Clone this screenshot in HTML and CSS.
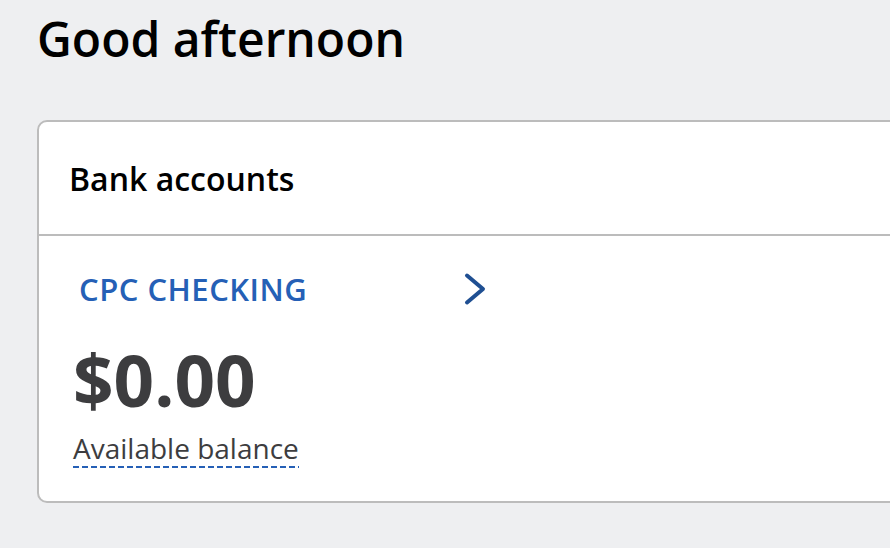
FILE: index.html
```html
<!DOCTYPE html>
<html>
<head>
<meta charset="utf-8">
<link rel="stylesheet" href="styles.css">
</head>
<body>
<main class="page">
  <h1 class="greeting">Good afternoon</h1>
  <section class="card">
    <header class="card-header">
      <h2 class="card-title">Bank accounts</h2>
    </header>
    <div class="card-body">
      <a class="account-row" href="#">
        <span class="account-name">CPC CHECKING</span>
        <svg class="chevron" width="24" height="34" viewBox="0 0 24 34" aria-hidden="true">
          <path d="M4 3.5 L20 17 L4 30.5" fill="none" stroke="#1f4f92" stroke-width="4" stroke-linecap="round" stroke-linejoin="round"/>
        </svg>
      </a>
      <div class="balance">$0.00</div>
      <div class="balance-label"><span class="dotted">Available balance</span></div>
    </div>
  </section>
</main>
</body>
</html>
```

FILE: styles.css
```css
html, body {
  margin: 0;
  padding: 0;
  background: #eeeff1;
  font-family: "Open Sans", "Noto Sans", sans-serif;
}
.page {
  padding: 9px 0 0 37px;
  width: 890px;
  height: 548px;
  box-sizing: border-box;
  overflow: hidden;
}
.greeting {
  margin: 0;
  font-size: 48px;
  font-weight: 600;
  color: #000;
  line-height: 60px;
}
.card {
  margin-top: 51px;
  width: 900px;
  height: 383px;
  background: #fff;
  border: 2px solid #bcbcbc;
  border-radius: 10px;
  box-sizing: border-box;
}
.card-header {
  height: 112px;
  border-bottom: 2px solid #bcbcbc;
  display: flex;
  align-items: center;
  padding-left: 30px;
}
.card-title {
  margin: 0;
  font-size: 32px;
  font-weight: 600;
  color: #000;
}
.card-body {
  padding: 33px 0 0 34px;
}
.account-row {
  display: flex;
  align-items: center;
  justify-content: space-between;
  width: 414px;
  height: 40px;
  padding-left: 6px;
  box-sizing: border-box;
  text-decoration: none;
}
.account-name {
  font-size: 31px;
  line-height: 40px;
  font-weight: 600;
  color: #2560b6;
  letter-spacing: 0.5px;
}
.chevron {
  flex: none;
}
.balance {
  margin-top: 31px;
  font-size: 71px;
  font-weight: 700;
  color: #3d3d3f;
  line-height: 80px;
}
.balance-label {
  margin-top: 10px;
  height: 40px;
}
.dotted {
  display: inline-block;
  font-size: 28px;
  line-height: 36px;
  color: #3d3d3f;
  padding-bottom: 2px;
  background-image: repeating-linear-gradient(90deg, #2560b6 0 6px, transparent 6px 9px);
  background-size: 100% 2px;
  background-position: left bottom;
  background-repeat: no-repeat;
}
```
